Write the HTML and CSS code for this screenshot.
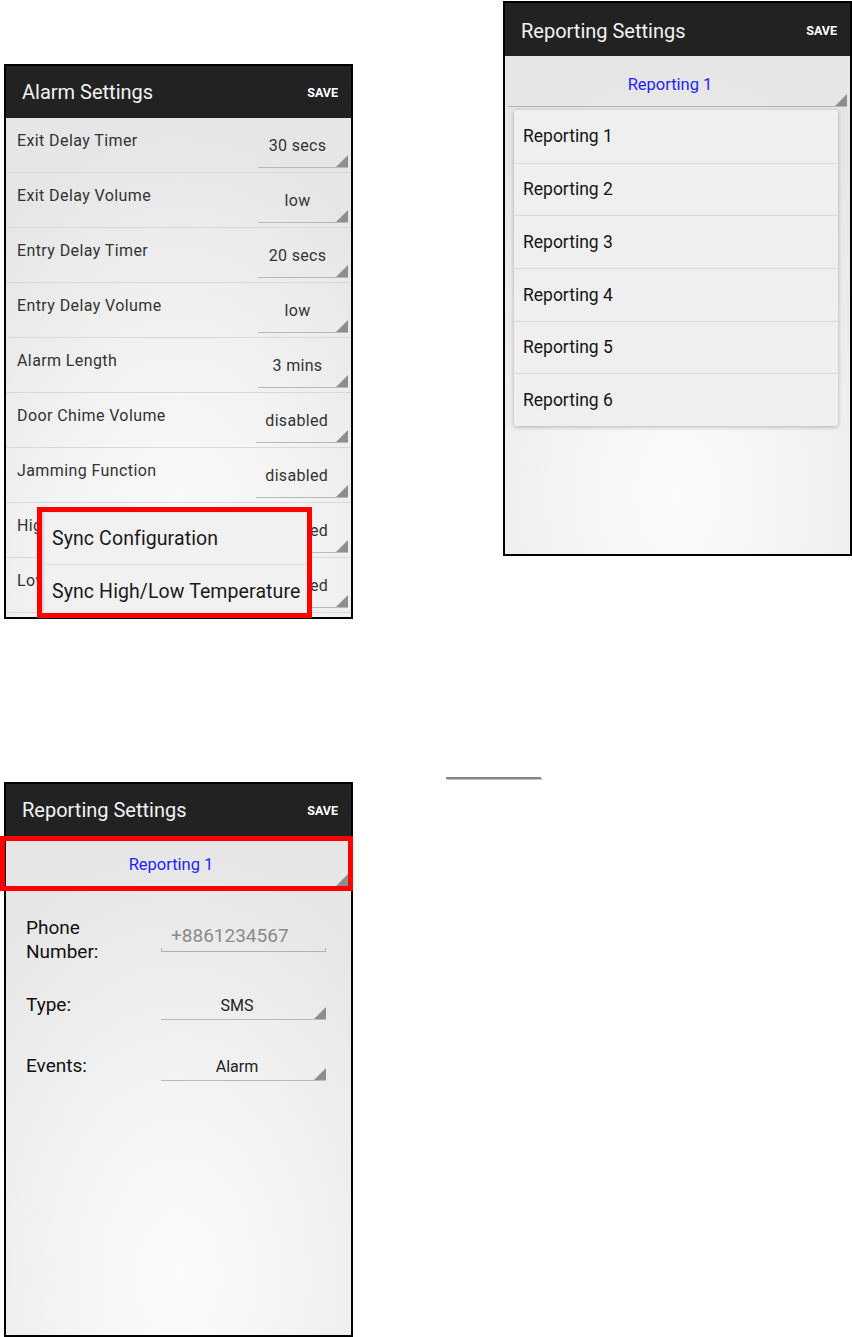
FILE: index.html
```html
<!DOCTYPE html>
<html lang="en">
<head>
<meta charset="utf-8">
<title>Settings screens</title>
<link rel="stylesheet" href="styles.css">
</head>
<body>
<div class="page">
  <div class="col col-left">
    <div class="shot shot-alarm">
      <div class="phone">
        <div class="appbar"><span class="appbar-title">Alarm Settings</span><span class="appbar-action">SAVE</span></div>
        <div class="content">
          <div class="setting-row"><span class="setting-label">Exit Delay Timer</span><span class="spinner">30 secs</span></div>
          <div class="setting-row"><span class="setting-label">Exit Delay Volume</span><span class="spinner">low</span></div>
          <div class="setting-row"><span class="setting-label">Entry Delay Timer</span><span class="spinner">20 secs</span></div>
          <div class="setting-row"><span class="setting-label">Entry Delay Volume</span><span class="spinner">low</span></div>
          <div class="setting-row"><span class="setting-label">Alarm Length</span><span class="spinner">3 mins</span></div>
          <div class="setting-row"><span class="setting-label">Door Chime Volume</span><span class="spinner">disabled</span></div>
          <div class="setting-row"><span class="setting-label">Jamming Function</span><span class="spinner">disabled</span></div>
          <div class="setting-row"><span class="setting-label">High Temperature</span><span class="spinner">disabled</span></div>
          <div class="setting-row"><span class="setting-label">Low Temperature</span><span class="spinner">disabled</span></div>
        </div>
      </div>
      <div class="highlight highlight-menu">
        <div class="overflow-menu">
          <div class="menu-item">Sync Configuration</div>
          <div class="menu-item">Sync High/Low Temperature</div>
        </div>
      </div>
    </div>

    <div class="shot shot-form">
      <div class="phone">
        <div class="appbar"><span class="appbar-title">Reporting Settings</span><span class="appbar-action">SAVE</span></div>
        <div class="content">
          <div class="top-spinner">Reporting 1</div>
          <div class="form">
            <div class="form-row form-row-phone">
              <div class="form-label">Phone<br>Number:</div>
              <div class="text-field">
                <div class="text-value">+8861234567</div>
                <div class="text-line"></div>
              </div>
            </div>
            <div class="form-row form-row-type">
              <div class="form-label">Type:</div>
              <div class="spinner spinner-form">SMS</div>
            </div>
            <div class="form-row form-row-events">
              <div class="form-label">Events:</div>
              <div class="spinner spinner-form">Alarm</div>
            </div>
          </div>
        </div>
      </div>
      <div class="highlight highlight-spinner"></div>
    </div>
  </div>

  <div class="col col-mid"><div class="divider"></div></div>

  <div class="col col-right">
    <div class="shot shot-dropdown">
      <div class="phone phone-tall">
        <div class="appbar appbar-tall"><span class="appbar-title">Reporting Settings</span><span class="appbar-action">SAVE</span></div>
        <div class="content">
          <div class="top-spinner">Reporting 1</div>
        </div>
      </div>
      <div class="dropdown">
        <div class="dropdown-item">Reporting 1</div>
        <div class="dropdown-item">Reporting 2</div>
        <div class="dropdown-item">Reporting 3</div>
        <div class="dropdown-item">Reporting 4</div>
        <div class="dropdown-item">Reporting 5</div>
        <div class="dropdown-item">Reporting 6</div>
      </div>
    </div>
  </div>
</div>
</body>
</html>
```

FILE: styles.css
```css
* { box-sizing: border-box; }

body {
  margin: 0;
  background: #fff;
  font-family: Roboto, "Noto Sans", "Liberation Sans", sans-serif;
}

.page {
  display: flex;
  width: 852px;
  height: 1337px;
  overflow: hidden;
}

.col { flex: none; }
.col-left { width: 353px; padding-left: 4px; }
.col-mid { width: 150px; }
.col-right { width: 349px; }

.shot { position: relative; width: 349px; }
.shot-alarm { margin-top: 64px; }
.shot-form { margin-top: 163px; }
.shot-dropdown { margin-top: 1px; }

.phone {
  width: 349px;
  height: 555px;
  border: 2px solid #000;
  overflow: hidden;
  display: flex;
  flex-direction: column;
  background: #e8e8e8;
}
.phone-tall { height: 555px; }

.appbar {
  flex: none;
  height: 52px;
  background: #222;
  display: flex;
  align-items: center;
  justify-content: space-between;
  padding: 0 13px 0 16px;
}
.appbar-tall { height: 53px; padding-top: 2px; }
.appbar-title { color: #f2f2f2; font-size: 20px; }
.appbar-action { color: #fff; font-size: 12.5px; font-weight: 700; }

.content {
  flex: 1;
  background: radial-gradient(ellipse 80% 85% at 50% 88%, #fbfbfb 0%, #f4f4f4 40%, #e6e6e6 100%);
}

/* alarm rows */
.setting-row {
  height: 55px;
  border-bottom: 1px solid #d8d8d8;
  display: flex;
  justify-content: space-between;
  align-items: flex-start;
  padding: 0 3px 0 11px;
}
.setting-label {
  margin-top: 13px;
  font-size: 16px;
  line-height: 20px;
  color: #333;
  letter-spacing: 0.4px;
}

.spinner {
  position: relative;
  margin-top: 9px;
  height: 41px;
  min-width: 90px;
  padding: 0 20px 4px 9px;
  border-bottom: 1px solid #b8b8b8;
  display: flex;
  align-items: center;
  justify-content: center;
  font-size: 16px;
  color: #333;
  letter-spacing: 0.3px;
}
.spinner::after {
  content: "";
  position: absolute;
  right: 0;
  bottom: 0;
  width: 12px;
  height: 12px;
  background: #8e8e8e;
  clip-path: polygon(100% 0, 100% 100%, 0 100%);
}

/* highlights */
.highlight {
  position: absolute;
  border: 5px solid #ff0000;
}
.highlight-menu { left: 33px; top: 443px; width: 275px; height: 111px; }
.highlight-spinner { left: -4px; top: 54px; width: 353px; height: 55px; }

.overflow-menu {
  height: 100%;
  overflow: hidden;
  background: #f1f1f1;
  box-shadow: inset 2px 0 2px rgba(0, 0, 0, 0.12);
}
.menu-item {
  height: 52px;
  padding-left: 10px;
  display: flex;
  align-items: center;
  font-size: 19.5px;
  letter-spacing: 0.1px;
  color: #1a1a1a;
}
.menu-item + .menu-item { border-top: 1px solid #dcdcdc; height: 53px; }

/* top spinner */
.top-spinner {
  position: relative;
  height: 51px;
  margin: 0 3px 3px;
  border-bottom: 1px solid #b5b5b5;
  padding: 6px 15px 0 0;
  display: flex;
  align-items: center;
  justify-content: center;
  color: #1e1eff;
  font-size: 16.5px;
}
.top-spinner::after {
  content: "";
  position: absolute;
  right: 0;
  bottom: 0;
  width: 12px;
  height: 12px;
  background: #8e8e8e;
  clip-path: polygon(100% 0, 100% 100%, 0 100%);
}

/* dropdown */
.dropdown {
  position: absolute;
  left: 11px;
  top: 109px;
  width: 324px;
  background: #efefef;
  border-radius: 2px;
  box-shadow: 0 1px 4px rgba(0, 0, 0, 0.28);
}
.dropdown-item {
  height: 52.67px;
  display: flex;
  align-items: center;
  padding-left: 9px;
  font-size: 17.5px;
  color: #151515;
}
.dropdown-item + .dropdown-item { border-top: 1px solid #d9d9d9; }

/* form */
.form { padding: 26px 0 0 20px; }
.form-row { display: flex; }
.form-row-phone { align-items: flex-start; }
.form-row-type { margin-top: 29px; align-items: baseline; }
.form-row-events { margin-top: 34px; align-items: baseline; }

.form-label {
  width: 135px;
  flex: none;
  font-size: 19px;
  line-height: 24px;
  color: #111;
}

.text-field { width: 165px; margin-top: 8px; }
.text-value {
  font-size: 19px;
  line-height: 24px;
  color: #8a8a8a;
  padding-left: 10px;
}
.text-line {
  height: 4px;
  border: 1px solid #b0b0b0;
  border-top: none;
}

.spinner-form {
  display: block;
  width: 165px;
  height: auto;
  min-width: 0;
  margin-top: 0;
  padding: 0 13px 1px 0;
  text-align: center;
  line-height: 24px;
  font-size: 16px;
  color: #222;
  letter-spacing: 0;
}

/* middle divider */
.divider {
  margin: 777px 0 0 93px;
  width: 95px;
  height: 2px;
  background: #858585;
  box-shadow: 1px 1px 0 #c4c4c4;
}
```
